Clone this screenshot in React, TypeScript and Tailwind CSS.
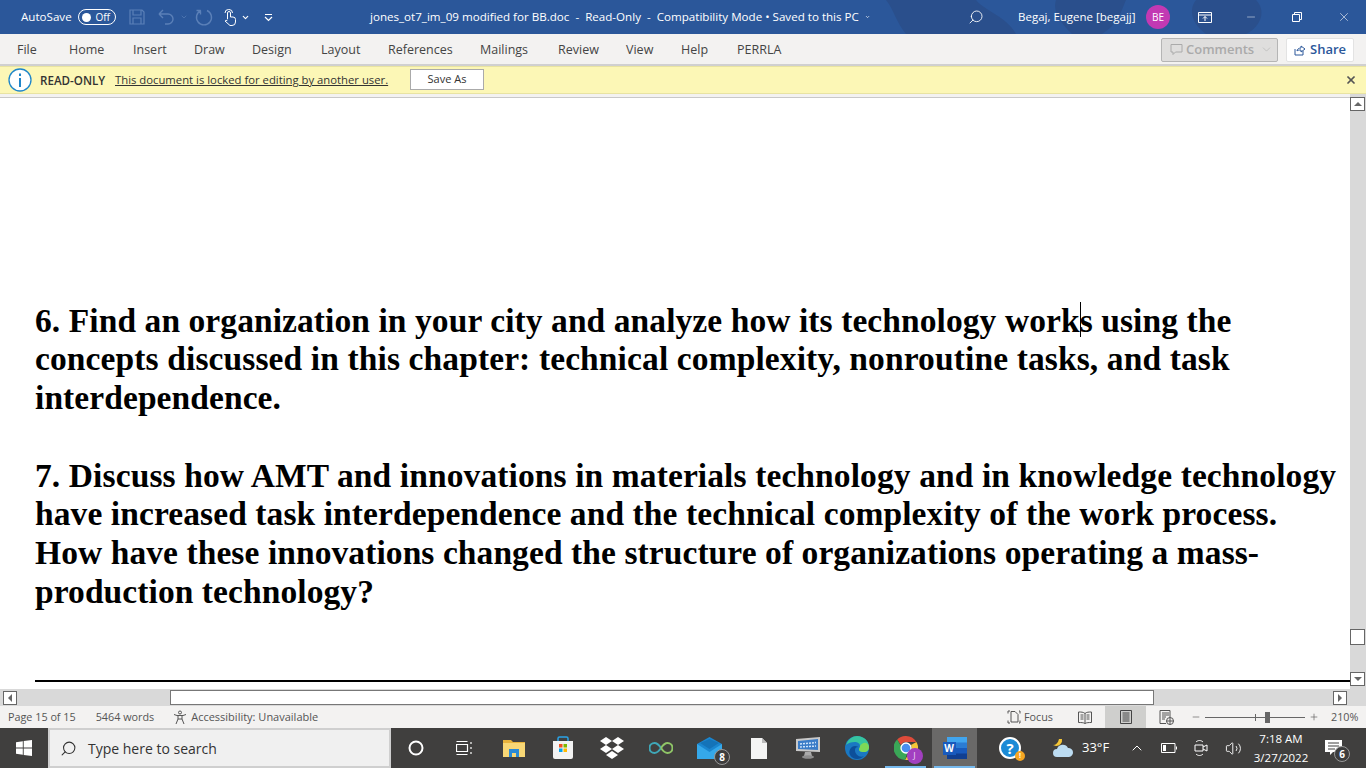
import React from 'react';
import { ChevronDown, ChevronUp, Search, X, Minus, Plus, Volume2 } from 'lucide-react';

const tabs = [
  { name: 'File', w: 'w-[52px]' },
  { name: 'Home', w: 'w-[64px]' },
  { name: 'Insert', w: 'w-[61px]' },
  { name: 'Draw', w: 'w-[58px]' },
  { name: 'Design', w: 'w-[69px]' },
  { name: 'Layout', w: 'w-[67px]' },
  { name: 'References', w: 'w-[92px]' },
  { name: 'Mailings', w: 'w-[78px]' },
  { name: 'Review', w: 'w-[68px]' },
  { name: 'View', w: 'w-[55px]' },
  { name: 'Help', w: 'w-[56px]' },
  { name: 'PERRLA', w: 'w-[60px]' },
];

const TitleBar = () => (
  <div className="relative h-[34px] bg-[#2b579a] text-white text-[11.6px] flex items-center shrink-0 overflow-hidden">
    {/* faint pattern behind the right side of the title bar */}
    <svg className="absolute right-0 top-0" width="480" height="34" viewBox="0 0 480 34" fill="#2a4f8c">
      <path d="M0 0h90c10 12 30 16 40 34H20C10 22 8 10 0 0z" />
      <path d="M170 0h70c-6 14-8 24-24 34h-30c-10-10-20-22-16-34z" />
      <path d="M310 0h60c10 10 6 26-10 34h-40c-14-10-18-24-10-34z" />
    </svg>
    <span className="relative ml-[21px] w-[57px]">AutoSave</span>
    <div className="relative w-[38px] h-[16px] rounded-full border border-white flex items-center justify-between px-[3px]">
      <span className="w-[9px] h-[9px] rounded-full bg-white" />
      <span className="text-[10px] mr-[2px]">Off</span>
    </div>
    <svg width="16" height="16" viewBox="0 0 16 16" fill="none" stroke="#5b80b8" strokeWidth="1.2" className="relative ml-[13px]">
      <path d="M1 1h12l2 2v12H1z M4 1v5h8V1 M4 15v-6h8v6" />
    </svg>
    <svg width="16" height="16" viewBox="0 0 16 16" fill="none" stroke="#5b80b8" strokeWidth="1.4" className="relative ml-[13px]">
      <path d="M1 5h9a4.500 4.500 0 0 1 0 10H7 M1 5l4-4 M1 5l4 4" />
    </svg>
    <ChevronDown size={8} className="relative text-[#5b80b8] ml-[6px]" />
    <svg width="18" height="18" viewBox="0 0 18 18" fill="none" stroke="#5b80b8" strokeWidth="1.4" className="relative ml-[7px]">
      <path d="M12 2.500a7.500 7.500 0 1 1-6 0 M5.500 2.500v4 M5.500 2.500H1.500" />
    </svg>
    <svg width="12" height="17" viewBox="0 0 12 17" fill="none" stroke="#fff" strokeWidth="1" className="relative ml-[11px]">
      <path d="M3.500 10V4a1.500 1.500 0 0 1 3 0v4h2.500a2.500 2.500 0 0 1 2.500 2.500V13a3.500 3.500 0 0 1-3.500 3.500H6L1 12l2.500-1 M1 4a3.500 3.500 0 0 1 3.500-3.500h.5A3.500 3.500 0 0 1 8.500 4" />
    </svg>
    <ChevronDown size={9} strokeWidth={3} className="relative ml-[5px]" />
    <svg width="9" height="9" viewBox="0 0 9 9" fill="none" stroke="#fff" strokeWidth="1.2" className="relative ml-[14px]">
      <path d="M1 1.500h7 M1 4l3.500 3.500L8 4" />
    </svg>
    <span className="relative ml-[97px] w-[500px] flex items-center whitespace-pre">
      jones_ot7_im_09 modified for BB.doc  -  Read-Only  -  Compatibility Mode • Saved to this PC
      <ChevronDown size={8} strokeWidth={3} className="ml-[6px]" />
    </span>
    <Search size={16} strokeWidth={1.3} className="relative -scale-x-100 ml-[98px]" />
    <span className="relative ml-[34px] w-[117px] whitespace-nowrap text-[11.500px]">Begaj, Eugene [begajj]</span>
    <span className="relative ml-[11px] w-[24px] h-[24px] rounded-full bg-[#c239b3] text-[10px] flex items-center justify-center">BE</span>
    <svg width="14" height="11" viewBox="0 0 14 11" fill="none" stroke="#fff" strokeWidth="1" className="relative ml-[28px]">
      <path d="M.5.500h13v10H.500z M.5 3h13 M7 9V4.500 M5 6.500l2-2 2 2" />
    </svg>
    <Minus size={12} strokeWidth={1} className="relative ml-[33px]" />
    <svg width="10" height="10" viewBox="0 0 10 10" fill="none" stroke="#fff" strokeWidth="1" className="relative ml-[35px]">
      <path d="M.5 2.500h7v7h-7z M2.500 2.500v-2h7v7h-2" />
    </svg>
    <X size={14} strokeWidth={1} className="relative ml-[35px]" />
  </div>
);

const Ribbon = () => (
  <div className="h-[32px] pt-[1px] bg-[#f3f2f1] flex items-center text-[12.500px] text-[#444] shrink-0 border-b-2 border-[#d0d0d0]">
    <div className="ml-[17px] mt-[1px] flex">
      {tabs.map((t) => (
        <span key={t.name} className={t.w}>{t.name}</span>
      ))}
    </div>
    <div className="ml-auto w-[117px] h-[24px] rounded-[2px] border border-[#b5b5b5] bg-[#dfdedd] text-[#aaa] text-[13px] font-semibold flex items-center pl-[8px]">
      <svg width="13" height="13" viewBox="0 0 13 13" fill="none" stroke="#aaa" strokeWidth="1">
        <path d="M1 1.500h11v7.500H5.500L3 11.500V9H1z" />
      </svg>
      <span className="ml-[3px]">Comments</span>
      <ChevronDown size={13} strokeWidth={1} className="ml-auto mr-[4px]" />
    </div>
    <div className="ml-[8px] mr-[12px] w-[68px] h-[24px] rounded-[2px] bg-white border border-[#e3e3e3] text-[#2b579a] text-[13px] font-semibold flex items-center pl-[7px] gap-[4px]">
      <svg width="12" height="12" viewBox="0 0 12 12" fill="none" stroke="#2b579a" strokeWidth="1">
        <path d="M1 5v6h8V7 M3 7c0-2 2-3 4-3V2l4 3-4 3V6c-2 0-3 0-4 1z" />
      </svg>
      Share
    </div>
  </div>
);

const ReadOnlyBar = () => (
  <div className="h-[28px] bg-[#fcf7b6] border-y border-[#e8e3a2] flex items-center text-[11.800px] text-[#333] shrink-0">
    <svg width="24" height="24" viewBox="0 0 24 24" fill="none" className="ml-[8px]">
      <circle cx="12" cy="12" r="11" stroke="#1f86c9" strokeWidth="1.300" fill="#fff" />
      <rect x="11" y="10" width="2" height="9" fill="#1f86c9" />
      <rect x="11" y="5.500" width="2" height="2.500" fill="#1f86c9" />
    </svg>
    <span className="ml-[8px] mt-[1px] font-semibold text-[11.600px] w-[67px] whitespace-nowrap">READ-ONLY</span>
    <span className="ml-[8px] mt-[1px] underline text-[11.300px] w-[274px] whitespace-nowrap">This document is locked for editing by another user.</span>
    <button className="ml-[21px] mb-[1px] w-[74px] h-[21px] bg-white border border-[#aaa] text-[11px]">Save As</button>
    <X size={12} strokeWidth={3.500} className="ml-auto mr-[9px] text-[#555]" />
  </div>
);

const Scrollbar = () => (
  <div className="w-[16px] shrink-0 flex flex-col bg-[#d9d9d9] pt-[3px]">
    <div className="h-[14px] w-[15px] bg-white border border-[#666] flex items-center justify-center">
      <span className="w-0 h-0 border-x-[4px] border-x-transparent border-b-[4px] border-b-[#666]" />
    </div>
    <div className="flex-1" />
    <div className="h-[16px] w-[15px] bg-white border border-[#666] mb-[27px]" />
    <div className="h-[14px] w-[15px] bg-white border border-[#666] flex items-center justify-center mb-[3px]">
      <span className="w-0 h-0 border-x-[4px] border-x-transparent border-t-[4px] border-t-[#666]" />
    </div>
  </div>
);

const Document = () => (
  <div className="flex-1 min-h-0 flex bg-white">
    <div className="flex-1 min-w-0 flex flex-col">
      <div className="h-[4px] bg-[#f3f2f1] border-b border-[#c8c8c8] shrink-0" />
      <div className="flex-1 flex flex-col pl-[35px] pt-[203.600px] font-['Liberation_Serif',serif] font-bold text-[33.500px] leading-[38.750px] text-black whitespace-nowrap tracking-[0.08px]">
        <div className="relative">
          6. Find an organization in your city and analyze how its technology works using the
          <span className="absolute left-[1045px] top-0 w-px h-[35px] bg-black" />
        </div>
        <div className="tracking-[0.115px]">concepts discussed in this chapter: technical complexity, nonroutine tasks, and task</div>
        <div>interdependence.</div>
        <div className="mt-[38.750px] tracking-[0.105px]">7. Discuss how AMT and innovations in materials technology and in knowledge technology</div>
        <div className="tracking-[0.09px]">have increased task interdependence and the technical complexity of the work process.</div>
        <div>How have these innovations changed the structure of organizations operating a mass-</div>
        <div>production technology?</div>
        <div className="mt-auto mb-[7px] h-[2px] bg-black" />
      </div>
    </div>
    <Scrollbar />
  </div>
);

const HScroll = () => (
  <div className="h-[17px] bg-[#d9d9d9] flex items-center pl-[3px] shrink-0">
    <div className="w-[14px] h-[14px] bg-white border border-[#666] flex items-center justify-center">
      <span className="w-0 h-0 border-y-[4px] border-y-transparent border-r-[4px] border-r-[#666]" />
    </div>
    <div className="ml-[153px] w-[984px] h-[15px] bg-white border border-[#777]" />
    <div className="ml-auto mr-[19px] w-[14px] h-[14px] bg-white border border-[#666] flex items-center justify-center">
      <span className="w-0 h-0 border-y-[4px] border-y-transparent border-l-[4px] border-l-[#666]" />
    </div>
  </div>
);

const StatusBar = () => (
  <div className="h-[22px] bg-[#f3f2f1] flex items-center text-[10.800px] text-[#555] shrink-0">
    <span className="ml-[8px]">Page 15 of 15</span>
    <span className="ml-[20px]">5464 words</span>
    <svg width="15" height="15" viewBox="0 0 15 15" fill="none" stroke="#555" strokeWidth="1" className="ml-[19px]">
      <circle cx="7" cy="2.500" r="1.500" />
      <path d="M1 4.500l3 1h6l3-1 M5 6v3l-2 5 M9 6v3l2 5 M5 9h4" />
    </svg>
    <span className="ml-[3px] text-[11px]">Accessibility: Unavailable</span>
    <div className="ml-auto mr-[8px] flex items-center h-full">
      <svg width="14" height="14" viewBox="0 0 14 14" fill="none" stroke="#555" strokeWidth="1">
        <path d="M4 3V1.500h4l3 3V12H4z M1 3.500v-2.500h2 M1 10.500V13h2 M13 3.500V1h-1 M13 10.500V13h-1" />
      </svg>
      <span className="ml-[3px] w-[30px]">Focus</span>
      <div className="ml-[11px] w-[40px] h-full flex items-center justify-center">
        <svg width="14" height="13" viewBox="0 0 14 13" fill="none" stroke="#555" strokeWidth="1">
          <path d="M7 2.500C5.500 1 3 1 .5 1v10.500c2.500 0 5 0 6.500 1 1.500-1 4-1 6.500-1V1C11 1 8.500 1 7 2.500z M7 2.500v10 M2.500 4h3 M2.500 6h3 M2.500 8h3 M8.500 4h3 M8.500 6h3 M8.500 8h3" />
        </svg>
      </div>
      <div className="w-[41px] h-full bg-[#cfcfcd] flex items-center justify-center">
        <svg width="12" height="14" viewBox="0 0 12 14" fill="none" stroke="#444" strokeWidth="1">
          <path d="M.5.500h11v13H.500z M2.500 3h7 M2.500 5h7 M2.500 7h7 M2.500 9h7 M2.500 11h7" />
        </svg>
      </div>
      <div className="w-[41px] h-full flex items-center justify-center">
        <svg width="15" height="15" viewBox="0 0 15 15" fill="none" stroke="#555" strokeWidth="1">
          <path d="M7 13.500H1V.500h10V7 M3 3h7 M3 5h7 M3 7h4 M3 9h3" />
          <circle cx="11" cy="11" r="3.500" />
          <path d="M7.500 11h7 M11 7.500v7" />
        </svg>
      </div>
      <Minus size={10} strokeWidth={1.500} className="ml-[4px]" />
      <div className="relative ml-[4px] w-[100px] h-px bg-[#666]">
        <span className="absolute left-[50px] top-[-3px] w-px h-[7px] bg-[#666]" />
        <span className="absolute left-[60px] top-[-5px] w-[5px] h-[11px] bg-[#666]" />
      </div>
      <Plus size={10} strokeWidth={1.500} className="ml-[4px]" />
      <span className="ml-[12px] w-[27px] whitespace-nowrap">210%</span>
    </div>
  </div>
);

const Badge = ({ label }: { label: string }) => (
  <span className="absolute -right-[8px] -bottom-[6px] w-[16px] h-[16px] rounded-full bg-[#3d3d3d] border border-[#999] text-white text-[10px] font-bold flex items-center justify-center">
    {label}
  </span>
);

const apps: { key: string; active?: boolean; running?: boolean; icon: React.ReactNode }[] = [
  {
    key: 'cortana',
    icon: (
      <svg width="16" height="16" viewBox="0 0 16 16" fill="none" stroke="#fff" strokeWidth="2">
        <circle cx="8" cy="8" r="6.500" />
      </svg>
    ),
  },
  {
    key: 'taskview',
    icon: (
      <svg width="18" height="16" viewBox="0 0 18 16" fill="none" stroke="#fff" strokeWidth="1.200">
        <path d="M.5 4.500h11v7H.500z M.5 1.500h11 M.5 14.500h11 M15 2v2 M15 7v2 M15 12v2" />
      </svg>
    ),
  },
  {
    key: 'explorer',
    icon: (
      <svg width="22" height="18" viewBox="0 0 22 18">
        <path d="M0 1h8l2 2h12v15H0z" fill="#e8b33c" />
        <path d="M0 4h22v14H0z" fill="#f8d775" />
        <path d="M6 10h10v8h-3v-4H9v4H6z" fill="#2a8ad4" />
      </svg>
    ),
  },
  {
    key: 'store',
    icon: (
      <svg width="22" height="24" viewBox="0 0 22 24">
        <path d="M6 6V2.500A1.500 1.500 0 0 1 7.500 1h7A1.500 1.500 0 0 1 16 2.500V6" fill="none" stroke="#2aa4e8" strokeWidth="1.500" />
        <path d="M1 5h20v16a2 2 0 0 1-2 2H3a2 2 0 0 1-2-2z" fill="#f2f2f2" />
        <rect x="7" y="8" width="3.500" height="3.500" fill="#f25022" />
        <rect x="11.500" y="8" width="3.500" height="3.500" fill="#7fba00" />
        <rect x="7" y="12.500" width="3.500" height="3.500" fill="#00a4ef" />
        <rect x="11.500" y="12.500" width="3.500" height="3.500" fill="#ffb900" />
      </svg>
    ),
  },
  {
    key: 'dropbox',
    icon: (
      <svg width="24" height="22" viewBox="0 0 24 22" fill="#fff">
        <path d="M6 0l6 4-6 4-6-4z M18 0l6 4-6 4-6-4z M0 12l6-4 6 4-6 4z M24 12l-6-4-6 4 6 4z M12 14l6 4-6 4-6-4z" />
      </svg>
    ),
  },
  {
    key: 'infinity',
    icon: (
      <svg width="24" height="12" viewBox="0 0 24 12" fill="none" strokeWidth="2">
        <path d="M12 6C10 3 8 1 5.500 1a5 5 0 0 0 0 10C8 11 10 9 12 6" stroke="#3fa8b8" />
        <path d="M12 6c2-3 4-5 6.500-5a5 5 0 0 1 0 10C16 11 14 9 12 6" stroke="#8fc567" />
      </svg>
    ),
  },
  {
    key: 'mail',
    icon: (
      <span className="relative flex">
        <svg width="25" height="22" viewBox="0 0 25 22">
          <path d="M0 7l12.500-7L25 7v15H0z" fill="#1a86d0" />
          <path d="M0 7l12.500 8L25 7v15H0z" fill="#35a8ea" />
          <path d="M3 6l9.500 6L22 6l-9.500-4z" fill="#1473b8" />
        </svg>
        <Badge label="8" />
      </span>
    ),
  },
  {
    key: 'file',
    icon: (
      <svg width="16" height="21" viewBox="0 0 16 21">
        <path d="M0 0h11l5 5v16H0z" fill="#f4f4f4" />
        <path d="M11 0l5 5h-5z" fill="#bbb" />
      </svg>
    ),
  },
  {
    key: 'monitor',
    icon: (
      <svg width="24" height="22" viewBox="0 0 24 22">
        <path d="M0 2l24-2v15L0 14z" fill="#c9c9c9" />
        <path d="M2 4l20-2v11L2 12z" fill="#3a7cc8" />
        <path d="M4 7l16-1.500M4 10l16-1" stroke="#cfe4fa" strokeWidth="1.500" strokeDasharray="2 1" />
        <path d="M9 15h6l1 4H8z" fill="#aaa" />
        <ellipse cx="12" cy="20" rx="6" ry="1.800" fill="#8d8d8d" />
      </svg>
    ),
  },
  {
    key: 'edge',
    icon: (
      <svg width="24" height="24" viewBox="0 0 24 24">
        <circle cx="12" cy="12" r="12" fill="#1a78c2" />
        <path d="M1 9C3 3 8 0 12 0c7 0 12 5 12 11 0 3-2 5-5 5-4 0-5-1-5-3 0-1 1-1 1-3 0-3-3-4-5-4C6 6 3 7 1 9z" fill="#36c5a0" />
        <path d="M24 11c0 3-2 5-5 5-4 0-5-1-5-3 0-1 1-1 1-3 2-4 8-5 9 1z" fill="#7ed957" />
        <path d="M10 14c0 5 5 8 9 6-4 4-11 4-14-1-2-4 1-9 5-9 2 0 3 1 3 1-2 0-3 1-3 3z" fill="#0c4f9a" />
      </svg>
    ),
  },
  {
    key: 'chrome',
    running: true,
    icon: (
      <span className="relative flex">
        <svg width="24" height="24" viewBox="0 0 24 24">
          <path d="M12 0a12 12 0 0 1 10.400 6H12a6 6 0 0 0-5.200 3L3.200 3.500A12 12 0 0 1 12 0z" fill="#de4b3a" />
          <path d="M22.400 6A12 12 0 0 1 11 24l5.200-9A6 6 0 0 0 17 9l5.400-3z" fill="#f5c637" />
          <path d="M3.200 3.500L8 12a5 5 0 0 0 6 3l-3 9A12 12 0 0 1 3.200 3.500z" fill="#3aa757" />
          <circle cx="12" cy="12" r="5" fill="#4a8ef0" stroke="#fff" strokeWidth="1.300" />
        </svg>
        <span className="absolute -right-[5px] -bottom-[4px] w-[16px] h-[16px] rounded-full bg-[#a23fc0] text-[#e8d0f0] text-[9px] flex items-center justify-center">J</span>
      </span>
    ),
  },
  {
    key: 'word',
    active: true,
    running: true,
    icon: (
      <span className="relative flex">
        <svg width="24" height="22" viewBox="0 0 24 22">
          <rect x="4" y="0" width="20" height="6" fill="#41a5ee" />
          <rect x="4" y="5.500" width="20" height="6" fill="#2b7cd3" />
          <rect x="4" y="11" width="20" height="6" fill="#185abd" />
          <rect x="4" y="16.500" width="20" height="5.500" fill="#103f91" />
        </svg>
        <span className="absolute left-0 top-[5px] w-[13px] h-[13px] bg-[#185abd] text-white text-[10px] font-bold flex items-center justify-center">W</span>
      </span>
    ),
  },
];

const Taskbar = () => (
  <div className="h-[40px] bg-[#403f3e] flex items-center text-white shrink-0">
    <svg width="16" height="16" viewBox="0 0 16 16" fill="#fff" className="ml-[16px]">
      <path d="M0 2.300l6.800-1v6.200H0z M7.700 1.100L16 0v7.500H7.700z M0 8.500h6.800v6.200l-6.800-1z M7.700 8.500H16V16l-8.300-1.100z" />
    </svg>
    <div className="ml-[16px] w-[343px] h-[40px] bg-[#f0f0f0] border-2 border-[#cfcfcf] flex items-center text-[#333] text-[14px]">
      <Search size={17} strokeWidth={1.500} className="ml-[10px] -scale-x-100" />
      <span className="ml-[11px]">Type here to search</span>
    </div>
    <div className="flex h-full">
      {apps.map((a) => (
        <div key={a.key} className="w-[49px] h-full flex justify-center">
          <div className={`relative w-[45px] h-full flex items-center justify-center ${a.active ? 'bg-[#6a6968]' : ''}`}>
            {a.icon}
            {a.running && <span className="absolute bottom-0 left-[2px] right-[2px] h-[2px] bg-[#76b9ed]" />}
          </div>
        </div>
      ))}
    </div>
    <span className="relative ml-[20px] flex">
      <svg width="22" height="22" viewBox="0 0 22 22">
        <circle cx="11" cy="11" r="10" fill="#1a8ad6" stroke="#fff" strokeWidth="2" />
        <text x="11" y="16.500" textAnchor="middle" fontSize="15" fontWeight="700" fill="#fff" fontFamily="Open Sans, sans-serif">?</text>
      </svg>
      <span className="absolute -right-[4px] -bottom-[2px] w-[10px] h-[10px] rounded-full bg-[#f5a623] text-white text-[7px] font-bold flex items-center justify-center">!</span>
    </span>
    <svg width="22" height="20" viewBox="0 0 22 20" className="ml-[31px]">
      <path d="M10 1a6 6 0 0 1-6 7L1 7c3 0 5-2 6-6z" fill="#f5c637" />
      <path d="M5 19a4 4 0 0 1 0-8 6 6 0 0 1 11-1 4.500 4.500 0 0 1 1 9z" fill="#bcdcf2" />
    </svg>
    <span className="ml-[8px] w-[28px] text-[13px] whitespace-nowrap">33°F</span>
    <ChevronUp size={16} strokeWidth={1.500} className="ml-[19px]" />
    <svg width="16" height="10" viewBox="0 0 16 10" fill="none" stroke="#fff" strokeWidth="1" className="ml-[16px]">
      <path d="M.5.500h13.500v9H.500z" />
      <rect x="2" y="2" width="3" height="6" fill="#fff" stroke="none" />
      <path d="M15.500 3.500v3" />
    </svg>
    <svg width="14" height="18" viewBox="0 0 14 18" fill="none" stroke="#fff" strokeWidth="1" className="ml-[17px]">
      <path d="M1 6h8v6H1z M9 8l4-2v6l-4-2 M2 3c2-2 5-2 7 0 M2 15c2 2 5 2 7 0" />
    </svg>
    <Volume2 size={17} strokeWidth={1.300} className="ml-[17px]" />
    <div className="ml-[9px] w-[60px] text-center text-[11.500px] leading-[19px] whitespace-nowrap">
      <div>7:18 AM</div>
      <div>3/27/2022</div>
    </div>
    <span className="relative ml-[14px] flex">
      <svg width="17" height="16" viewBox="0 0 17 16">
        <path d="M0 0h17v12H8l-3 3v-3H0z" fill="#fff" />
        <path d="M3 3h11M3 6h11M3 9h7" stroke="#404040" strokeWidth="1" />
      </svg>
      <Badge label="6" />
    </span>
  </div>
);

export default function App() {
  return (
    <div className="h-[768px] w-[1366px] overflow-hidden flex flex-col font-['Open_Sans',sans-serif]">
      <TitleBar />
      <Ribbon />
      <ReadOnlyBar />
      <Document />
      <HScroll />
      <StatusBar />
      <Taskbar />
    </div>
  );
}
